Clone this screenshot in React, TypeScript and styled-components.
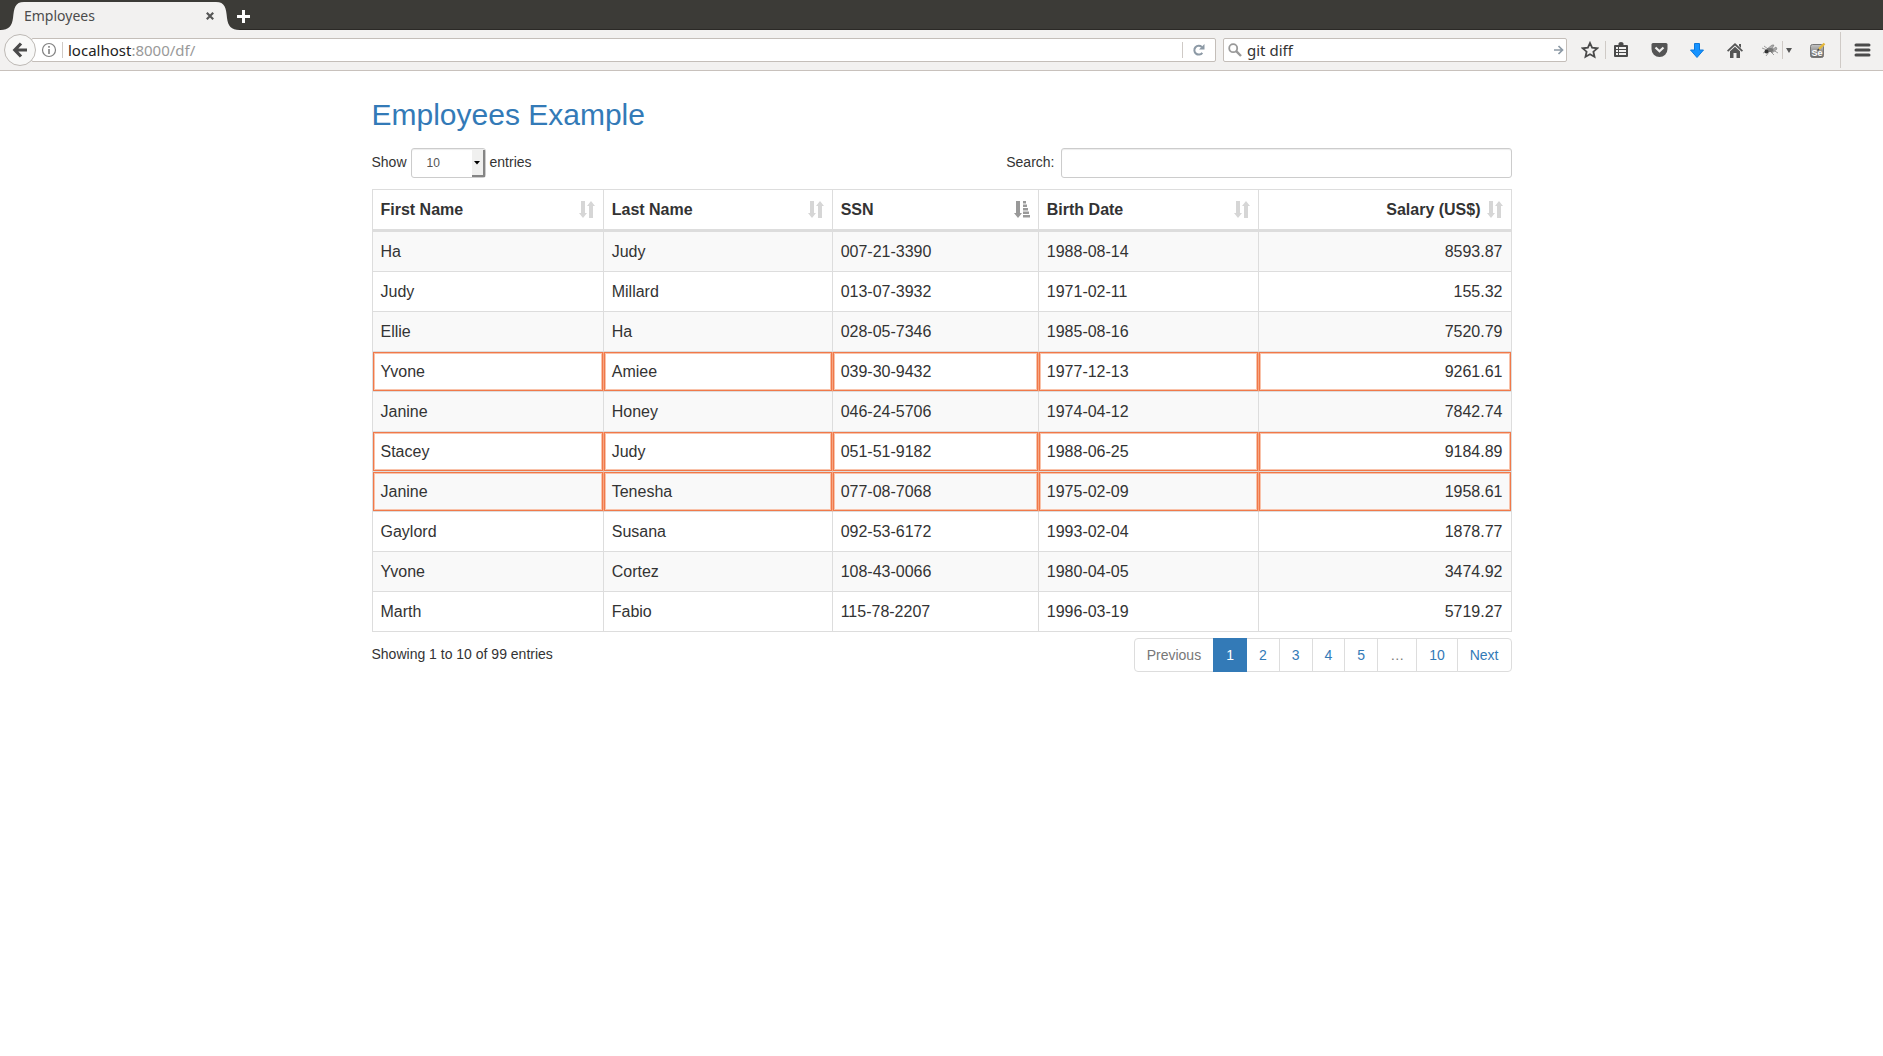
import React, { useState } from "react";
import styled, { createGlobalStyle } from "styled-components";

const GlobalStyle = createGlobalStyle`
  *, *::before, *::after { box-sizing: border-box; }
  body {
    margin: 0;
    background: #fff;
    color: #333;
    font: 14px/20px "Liberation Sans", Arial, sans-serif;
  }
`;

const uiFont = `"Noto Sans", "Open Sans", sans-serif`;

/* ---------- browser window ---------- */

const TabStrip = styled.div`
  display: flex;
  align-items: flex-end;
  height: 30px;
  background: #3c3b37;
  box-shadow: inset 0 -1px 0 #2b2926;
`;

const TabEdge = styled.svg`
  flex: none;
  width: 24px;
  height: 28px;
  fill: #f2f1f0;
`;

const Tab = styled.div`
  display: flex;
  align-items: center;
  justify-content: space-between;
  width: 192px;
  height: 28px;
  background: #f2f1f0;
  color: #4c4c4c;
  font: 14px/20px ${uiFont};
`;

const PlainButton = styled.button`
  display: flex;
  align-items: center;
  justify-content: center;
  flex: none;
  padding: 0;
  border: 0;
  background: none;
`;

const NewTabButton = styled(PlainButton)`
  width: 20px;
  height: 28px;
  margin-left: -7px;
`;

const CloseButton = styled(PlainButton)`
  width: 12px;
  height: 20px;
`;

const Toolbar = styled.div`
  display: flex;
  align-items: center;
  height: 41px;
  padding-left: 4px;
  background: #f2f1f0;
  border-bottom: 1px solid #c8c1bc;
`;

const BackButton = styled(PlainButton)`
  z-index: 1;
  width: 32px;
  height: 32px;
  border: 1px solid #bdb9b5;
  border-radius: 50%;
  background: #f8f8f7;
`;

const Field = styled.div`
  display: flex;
  align-items: center;
  height: 24px;
  border: 1px solid #c4beb9;
  border-radius: 2px;
  background: #fff;
`;

const AddressField = styled(Field)`
  flex: 1;
  margin-left: -5px;
  padding-left: 9px;
`;

const SearchField = styled(Field)`
  flex: none;
  width: 344px;
  margin: 0 8px 0 7px;
  padding: 0 2px 0 4px;
`;

const Divider = styled.span<{ $h: number }>`
  flex: none;
  width: 1px;
  height: ${(p) => p.$h}px;
  background: #cfcac6;
`;

const SiteInfo = styled(PlainButton)`
  margin-right: 5px;
`;

const Address = styled.a`
  flex: 1;
  padding-left: 5px;
  color: #999;
  font: 15px/20px ${uiFont};
  text-decoration: none;
`;

const Host = styled.span`
  color: #222;
`;

const SearchText = styled.input`
  flex: 1;
  min-width: 0;
  padding: 0 0 0 5px;
  border: 0;
  background: none;
  color: #333;
  font: 15px/20px ${uiFont};
`;

const IconSlot = styled(PlainButton)<{ $w: number }>`
  width: ${(p) => p.$w}px;
  height: 32px;
`;

/* ---------- page ---------- */

const Container = styled.main`
  width: 100%;
  max-width: 1170px;
  margin: 0 auto;
  padding: 0 15px;
`;

const Title = styled.h2`
  margin: 26px 0 16px;
  color: #337ab7;
  font-size: 30px;
  font-weight: 400;
  line-height: 35px;
`;

const Controls = styled.div`
  display: flex;
  align-items: center;
  justify-content: space-between;
  margin-bottom: 11px;
`;

const ControlLabel = styled.label`
  display: flex;
  gap: 4px;
  line-height: 28px;
`;

const SelectBox = styled.span`
  position: relative;
  display: inline-flex;
`;

const LengthSelect = styled.select`
  appearance: none;
  width: 75px;
  height: 30px;
  padding: 0 15px;
  border: 1px solid #ccc;
  border-radius: 3px;
  background: #fff;
  box-shadow: inset 0 1px 1px rgba(0, 0, 0, 0.075);
  color: #555;
  font: 12px/18px "Liberation Sans", Arial, sans-serif;
`;

const SelectArrow = styled.span`
  position: absolute;
  top: 2px;
  right: 1px;
  bottom: 1px;
  display: flex;
  align-items: center;
  justify-content: center;
  width: 13px;
  border-right: 2px solid #858585;
  border-bottom: 2px solid #858585;
  background: #f0f0ef;
  pointer-events: none;
`;

const FilterInput = styled.input`
  width: 451px;
  height: 30px;
  margin-left: 2px;
  padding: 5px 10px;
  border: 1px solid #ccc;
  border-radius: 3px;
  box-shadow: inset 0 1px 1px rgba(0, 0, 0, 0.075);
  font: 12px/18px "Liberation Sans", Arial, sans-serif;
`;

const Table = styled.table`
  width: 100%;
  table-layout: fixed;
  border-collapse: separate;
  border-spacing: 0;
  border-top: 1px solid #ddd;
  border-left: 1px solid #ddd;
  font-size: 16px;
  line-height: 23px;
`;

const Col = styled.col<{ $w?: number }>`
  width: ${(p) => (p.$w ? `${p.$w}%` : "auto")};
`;

const HeadCell = styled.th`
  padding: 8px;
  border-right: 1px solid #ddd;
  border-bottom: 3px solid #ddd;
  text-align: left;
`;

const HeadContent = styled.div<{ $right?: boolean }>`
  display: flex;
  align-items: center;
  justify-content: ${(p) => (p.$right ? "flex-end" : "space-between")};
  gap: 4px;
`;

const SortIcon = styled.svg<{ $active?: boolean }>`
  width: 18px;
  height: 18px;
  fill: ${(p) => (p.$active ? "#999" : "#d6d6d6")};
`;

const Cell = styled.td<{ $right?: boolean }>`
  padding: 8px;
  border-right: 1px solid #ddd;
  border-bottom: 1px solid #ddd;
  text-align: ${(p) => (p.$right ? "right" : "left")};
`;

const Row = styled.tr<{ $marked?: boolean }>`
  &:nth-child(odd) {
    background: #f9f9f9;
  }
  ${Cell} {
    box-shadow: ${(p) =>
      p.$marked ? "inset 0 0 0 1px #f0794a, inset 0 0 0 2px #f9c3ab" : "none"};
  }
  ${Cell}:not(:last-child) {
    border-right-color: ${(p) => (p.$marked ? "#f6a582" : "#ddd")};
  }
`;

const Footer = styled.div`
  display: flex;
  justify-content: space-between;
  margin-top: 6px;
`;

const Summary = styled.span`
  line-height: 32px;
`;

const Pages = styled.ul`
  display: flex;
  margin: 0;
  padding: 0;
  list-style: none;
`;

const PageLink = styled.a<{ $active?: boolean; $muted?: boolean }>`
  position: relative;
  z-index: ${(p) => (p.$active ? 1 : 0)};
  display: block;
  padding: 6px 12px;
  border: 1px solid ${(p) => (p.$active ? "#337ab7" : "#ddd")};
  background: ${(p) => (p.$active ? "#337ab7" : "#fff")};
  color: ${(p) => (p.$active ? "#fff" : p.$muted ? "#777" : "#337ab7")};
  text-decoration: none;
`;

const PageItem = styled.li`
  & + & {
    margin-left: -1px;
  }
  &:first-child > ${PageLink} {
    border-radius: 4px 0 0 4px;
  }
  &:last-child > ${PageLink} {
    border-radius: 0 4px 4px 0;
  }
`;

interface Column {
  name: string;
  width?: number;
  sorted?: boolean;
  right?: boolean;
}

const columns: Column[] = [
  { name: "First Name", width: 20.3 },
  { name: "Last Name", width: 20.1 },
  { name: "SSN", width: 18.1, sorted: true },
  { name: "Birth Date", width: 19.3 },
  { name: "Salary (US$)", right: true },
];

const employees = [
  ["Ha", "Judy", "007-21-3390", "1988-08-14", "8593.87"],
  ["Judy", "Millard", "013-07-3932", "1971-02-11", "155.32"],
  ["Ellie", "Ha", "028-05-7346", "1985-08-16", "7520.79"],
  ["Yvone", "Amiee", "039-30-9432", "1977-12-13", "9261.61"],
  ["Janine", "Honey", "046-24-5706", "1974-04-12", "7842.74"],
  ["Stacey", "Judy", "051-51-9182", "1988-06-25", "9184.89"],
  ["Janine", "Tenesha", "077-08-7068", "1975-02-09", "1958.61"],
  ["Gaylord", "Susana", "092-53-6172", "1993-02-04", "1878.77"],
  ["Yvone", "Cortez", "108-43-0066", "1980-04-05", "3474.92"],
  ["Marth", "Fabio", "115-78-2207", "1996-03-19", "5719.27"],
];

const marked = new Set(["039-30-9432", "051-51-9182", "077-08-7068"]);

const pages = ["Previous", "1", "2", "3", "4", "5", "…", "10", "Next"];

function SortMark({ sorted }: { sorted?: boolean }) {
  return (
    <SortIcon $active={sorted} viewBox="0 0 18 18" aria-hidden="true">
      <path d="M4 0h4v12h2L6 17 2 12h2z" />
      {sorted ? (
        <path d="M11 0h3v2.600h-3zM11 3.500h4v2.600h-4zM11 7h5v2.600h-5zM11 10.500h6v2.600h-6zM11 14h7v2.600h-7z" />
      ) : (
        <path d="M12 17h4V5h2L14 0 10 5h2z" />
      )}
    </SortIcon>
  );
}

function Browser() {
  const [query, setQuery] = useState("git diff");
  return (
    <header>
      <TabStrip>
        <TabEdge viewBox="0 0 24 28">
          <path d="M0 28C9 28 12 24 13 16C14 6 15 0 24 0V28Z" />
        </TabEdge>
        <Tab>
          Employees
          <CloseButton aria-label="Close tab">
            <svg width="8" height="8" viewBox="0 0 8 8" stroke="#555" strokeWidth="2.2">
              <path d="M.8.8l6.4 6.4M7.2.8L.8 7.2" />
            </svg>
          </CloseButton>
        </Tab>
        <TabEdge viewBox="0 0 24 28">
          <path d="M24 28C15 28 12 24 11 16C10 6 9 0 0 0V28Z" />
        </TabEdge>
        <NewTabButton aria-label="New tab">
          <svg width="13" height="13" viewBox="0 0 13 13" stroke="#fff" strokeWidth="3">
            <path d="M6.5 0v13M0 6.5h13" />
          </svg>
        </NewTabButton>
      </TabStrip>
      <Toolbar>
        <BackButton aria-label="Back">
          <svg width="16" height="16" viewBox="0 0 16 16" fill="none" stroke="#4a4a4a" strokeWidth="3.2">
            <path d="M9 1.5L2.8 8L9 14.5M3 8h12" />
          </svg>
        </BackButton>
        <AddressField>
          <SiteInfo aria-label="Site information">
            <svg width="16" height="16" viewBox="0 0 16 16" fill="none" stroke="#808080">
              <circle cx="8" cy="8" r="6.5" strokeWidth="1.2" />
              <path d="M8 7v5M8 4v1.8" strokeWidth="1.6" />
            </svg>
          </SiteInfo>
          <Divider $h={16} />
          <Address href="#">
            <Host>localhost</Host>:8000/df/
          </Address>
          <Divider $h={16} />
          <IconSlot $w={32} aria-label="Reload">
            <svg width="12" height="12" viewBox="0 0 12 12">
              <path d="M9.3 8.8A4.4 4.4 0 1 1 8.8 3" fill="none" stroke="#8c99a5" strokeWidth="2" />
              <path d="M11.5 0v5.5H6z" fill="#8c99a5" />
            </svg>
          </IconSlot>
        </AddressField>
        <SearchField>
          <svg width="14" height="14" viewBox="0 0 14 14" fill="none" stroke="#999">
            <circle cx="5.2" cy="5.2" r="4" strokeWidth="1.8" />
            <path d="M8.2 8.2L13 13" strokeWidth="2.4" />
          </svg>
          <SearchText
            aria-label="Web search"
            value={query}
            onChange={(e) => setQuery(e.target.value)}
          />
          <PlainButton aria-label="Go">
            <svg width="10" height="10" viewBox="0 0 10 10" fill="none" stroke="#8c99a5" strokeWidth="1.7">
              <path d="M0 5h8.5M4.5 1L8.5 5L4.5 9" />
            </svg>
          </PlainButton>
        </SearchField>
        <IconSlot $w={30} aria-label="Bookmark this page">
          <svg width="18" height="18" viewBox="0 0 18 18" fill="none" stroke="#4a4a4a" strokeWidth="1.8">
            <path d="M9 2l2.1 4.7 5.1.6-3.8 3.4 1.1 5L9 13.200 4.500 15.700l1.100-5L1.800 7.300l5.100-.6z" />
          </svg>
        </IconSlot>
        <Divider $h={18} />
        <IconSlot $w={30} aria-label="Bookmarks">
          <svg width="14" height="16" viewBox="0 0 14 16">
            <path d="M4.500 1.500q0-1.500 2.500-1.500t2.500 1.500V3H13q1 0 1 1v10q0 1-1 1H1q-1 0-1-1V4q0-1 1-1h3.500z" fill="#4a4a4a" />
            <path d="M2 5h2v2H2zM5 5h7v2H5zM2 8h2v2H2zM5 8h7v2H5zM2 11h2v2H2zM5 11h7v2H5z" fill="#f2f1f0" />
          </svg>
        </IconSlot>
        <IconSlot $w={46} aria-label="Pocket">
          <svg width="17" height="16" viewBox="0 0 17 16">
            <path d="M2 1h13q1.500 0 1.500 1.500V7a8 8 0 0 1-16 0V2.500Q.5 1 2 1z" fill="#555" />
            <path d="M4.500 5.500L8.500 9.300L12.500 5.500" fill="none" stroke="#f2f1f0" strokeWidth="2.2" />
          </svg>
        </IconSlot>
        <IconSlot $w={30} aria-label="Downloads">
          <svg width="14" height="15" viewBox="0 0 14 15">
            <path d="M4.500.5h5v6.500h4L7 14.500L.5 7h4z" fill="#1693ff" stroke="#0c78dc" />
          </svg>
        </IconSlot>
        <IconSlot $w={46} aria-label="Home">
          <svg width="16" height="15" viewBox="0 0 16 15" fill="#555">
            <path d="M8 0l8 7.500-1.200 1.200L8 2.500 1.200 8.700 0 7.500zM12 1h2v4l-2-2z" />
            <path d="M3 8.200L8 3.700l5 4.500V15H9.500v-5h-3v5H3z" />
          </svg>
        </IconSlot>
        <IconSlot $w={24} aria-label="Fly extension">
          <svg width="16" height="12" viewBox="0 0 16 12" fill="none" stroke="#888" strokeWidth=".8">
            <path d="M0 4l5 2M1 9l5-2M4 12l3-4M9 8l3 3M11 6l5 3M2 2l4 3" />
            <path d="M5 5l5-4 2 0-2 4zM8 7l6-4 1 2-5 4z" fill="#aaa" stroke="#777" strokeWidth=".6" />
            <ellipse cx="8" cy="6" rx="3.5" ry="2" fill="#777" stroke="none" />
            <circle cx="4.500" cy="7.500" r="2" fill="#333" stroke="none" />
          </svg>
        </IconSlot>
        <Divider $h={18} />
        <IconSlot $w={12} aria-label="Fly extension menu">
          <svg width="6" height="5" viewBox="0 0 6 5" fill="#555">
            <path d="M0 0h6L3 5z" />
          </svg>
        </IconSlot>
        <IconSlot $w={45} aria-label="Selenium">
          <svg width="16" height="16" viewBox="0 0 16 16">
            <defs>
              <linearGradient id="badge" x1="0" y1="0" x2="0" y2="1">
                <stop offset="0" stopColor="#c4c4c4" />
                <stop offset="1" stopColor="#666" />
              </linearGradient>
            </defs>
            <rect x=".5" y="2.500" width="13" height="13" rx="2" fill="url(#badge)" stroke="#777" />
            <text x="1.500" y="13.500" fontSize="9" fontWeight="700" fontFamily="Liberation Sans, sans-serif" fill="#fff">
              Se
            </text>
            <path d="M9 7L14.500 1.500" stroke="#e6b93c" strokeWidth="2.4" />
            <path d="M7.500 8.500L9 7" stroke="#444" strokeWidth="1.5" />
          </svg>
        </IconSlot>
        <Divider $h={36} />
        <IconSlot $w={42} aria-label="Open menu">
          <svg width="17" height="14" viewBox="0 0 17 14" stroke="#4a4a4a" strokeWidth="3" strokeLinecap="round">
            <path d="M2 2h13M2 7h13M2 12h13" />
          </svg>
        </IconSlot>
      </Toolbar>
    </header>
  );
}

export default function App() {
  const [filter, setFilter] = useState("");
  return (
    <>
      <GlobalStyle />
      <Browser />
      <Container>
        <Title>Employees Example</Title>
        <Controls>
          <ControlLabel>
            Show
            <SelectBox>
              <LengthSelect defaultValue="10">
                <option>10</option>
                <option>25</option>
                <option>50</option>
                <option>100</option>
              </LengthSelect>
              <SelectArrow>
                <svg width="6" height="4" viewBox="0 0 6 4">
                  <path d="M0 0h6L3 3.500z" />
                </svg>
              </SelectArrow>
            </SelectBox>
            entries
          </ControlLabel>
          <ControlLabel>
            Search:
            <FilterInput
              type="search"
              value={filter}
              onChange={(e) => setFilter(e.target.value)}
            />
          </ControlLabel>
        </Controls>
        <Table>
          <colgroup>
            {columns.map((c) => (
              <Col key={c.name} $w={c.width} />
            ))}
          </colgroup>
          <thead>
            <tr>
              {columns.map((c) => (
                <HeadCell key={c.name} scope="col">
                  <HeadContent $right={c.right}>
                    {c.name}
                    <SortMark sorted={c.sorted} />
                  </HeadContent>
                </HeadCell>
              ))}
            </tr>
          </thead>
          <tbody>
            {employees.map((e) => (
              <Row key={e[2]} $marked={marked.has(e[2])}>
                {e.map((value, i) => (
                  <Cell key={i} $right={columns[i].right}>
                    {value}
                  </Cell>
                ))}
              </Row>
            ))}
          </tbody>
        </Table>
        <Footer>
          <Summary>Showing 1 to 10 of 99 entries</Summary>
          <Pages>
            {pages.map((p) => (
              <PageItem key={p}>
                <PageLink href="#" $active={p === "1"} $muted={p === "Previous" || p === "…"}>
                  {p}
                </PageLink>
              </PageItem>
            ))}
          </Pages>
        </Footer>
      </Container>
    </>
  );
}
